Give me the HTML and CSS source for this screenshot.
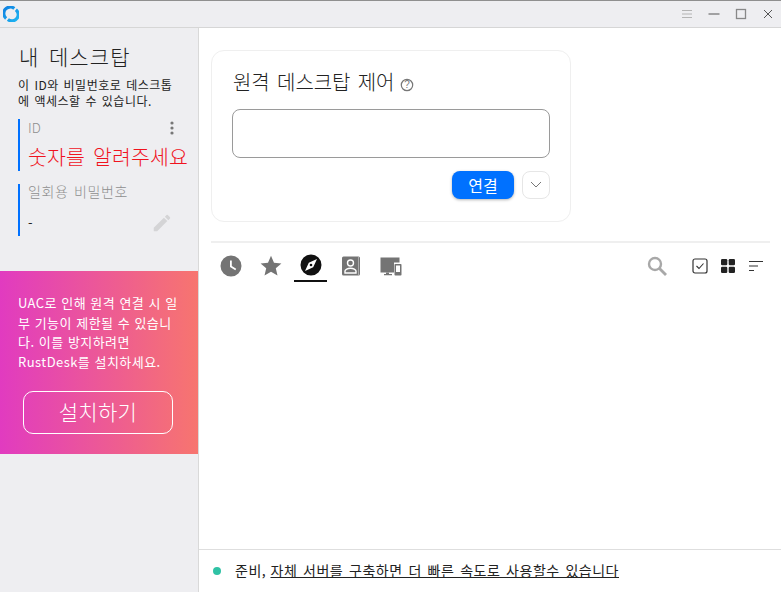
FILE: index.html
```html
<!DOCTYPE html>
<html lang="ko">
<head>
<meta charset="utf-8">
<title>RustDesk</title>
<link rel="stylesheet" href="styles.css">
</head>
<body>
<div class="window">
  <header class="titlebar">
    <svg class="logo" width="16" height="16" viewBox="0 0 16 16"><defs><linearGradient id="lg" x1="0" y1="0" x2="1" y2="1"><stop offset="0" stop-color="#0f7fe0"/><stop offset="1" stop-color="#1fb6f2"/></linearGradient></defs><path d="M3.100 12.400A6.300 6.300 0 0 1 11.300 2.500M12.900 3.700A6.300 6.300 0 0 1 4.900 13.500" fill="none" stroke="url(#lg)" stroke-width="3.200" /></svg>
    <div class="winbtns">
      <svg width="12" height="12" viewBox="0 0 12 12"><path d="M1 2.500h10M1 6h10M1 9.500h10" stroke="#b4b4b4" stroke-width="1"/></svg>
      <svg width="12" height="12" viewBox="0 0 12 12"><path d="M0.500 6h11" stroke="#555" stroke-width="1"/></svg>
      <svg width="12" height="12" viewBox="0 0 12 12"><rect x="1.500" y="1.500" width="9" height="9" fill="none" stroke="#888" stroke-width="1.300"/></svg>
      <svg width="12" height="12" viewBox="0 0 12 12"><path d="M2 2l8 8M10 2l-8 8" stroke="#555" stroke-width="1"/></svg>
    </div>
  </header>
  <div class="body">
    <aside class="sidebar">
      <div class="side-top">
        <h1 class="side-title">내 데스크탑</h1>
        <p class="side-desc">이 ID와 비밀번호로 데스크톱<br>에 액세스할 수 있습니다.</p>
        <div class="field field-id">
          <div class="field-head"><span class="field-label">ID</span><svg class="kebab" width="4" height="14" viewBox="0 0 4 14"><circle cx="2" cy="2" r="1.600"/><circle cx="2" cy="7" r="1.600"/><circle cx="2" cy="12" r="1.600"/></svg></div>
          <div class="id-value">숫자를 알려주세요</div>
        </div>
        <div class="field field-pw">
          <div class="field-label pw-label">일회용 비밀번호</div>
          <div class="pw-row"><span class="pw-value">-</span><svg class="pencil" width="22" height="22" viewBox="0 0 24 24"><path d="M3 17.250V21h3.750L17.800 9.940l-3.750-3.750L3 17.250zM20.700 7.040a1 1 0 0 0 0-1.410l-2.340-2.340a1 1 0 0 0-1.410 0l-1.830 1.830 3.750 3.750 1.830-1.830z"/></svg></div>
        </div>
      </div>
      <div class="promo">
        <p class="promo-text">UAC로 인해 원격 연결 시 일<br>부 기능이 제한될 수 있습니<br>다. 이를 방지하려면<br>RustDesk를 설치하세요.</p>
        <div class="promo-btn">설치하기</div>
      </div>
    </aside>
    <main class="main">
      <div class="content">
        <section class="card">
          <div class="card-title"><span>원격 데스크탑 제어</span><svg class="help" width="14" height="14" viewBox="0 0 14 14"><circle cx="7" cy="7" r="5.700" fill="none" stroke="#777" stroke-width="1.200"/><text class="help-q" x="7" y="10" text-anchor="middle">?</text></svg></div>
          <div class="card-input"></div>
          <div class="card-actions">
            <div class="connect">연결</div>
            <div class="more"><svg width="12" height="8" viewBox="0 0 12 8"><path d="M1 1l5 5 5-5" fill="none" stroke="#777" stroke-width="1"/></svg></div>
          </div>
        </section>
        <div class="tabs-wrap">
          <nav class="tabs">
            <div class="tab"><svg width="24" height="24" viewBox="0 0 24 24"><path fill="#747474" d="M12 1.500a10.500 10.500 0 1 0 0 21 10.500 10.500 0 0 0 0-21zm4.300 14.800L11 13V6.500h1.800V12l4.400 2.800z"/></svg></div>
            <div class="tab"><svg width="24" height="24" viewBox="0 0 24 24"><path fill="#747474" d="M12 1.800l3 7 7.400.6-5.600 4.900 1.700 7.300L12 17.800l-6.500 3.800 1.700-7.300L1.600 9.400l7.400-.6z"/></svg></div>
            <div class="tab active"><svg width="24" height="24" viewBox="0 0 24 24"><path fill="#111" fill-rule="evenodd" d="M12 1.500a10.500 10.500 0 1 0 0 21 10.500 10.500 0 0 0 0-21zM6 18l3.800-8.200L18 6l-3.800 8.200z"/><circle cx="12" cy="12" r="1.300" fill="#111"/></svg></div>
            <div class="tab"><svg width="24" height="24" viewBox="0 0 24 24"><rect x="3" y="2.500" width="18" height="19" rx="1.500" fill="#747474"/><circle cx="11.500" cy="9" r="3" fill="none" stroke="#fff" stroke-width="1.400"/><path d="M6 19v-2c0-1.500 2.700-2.800 5.500-2.800s5.500 1.300 5.500 2.800v2z" fill="none" stroke="#fff" stroke-width="1.400"/><path d="M19.500 3v18" stroke="#aaa" stroke-width="1"/></svg></div>
            <div class="tab"><svg width="24" height="24" viewBox="0 0 24 24"><path fill="#747474" d="M1.500 3.500h19v5h-5.500v10H1.500z"/><path fill="#747474" d="M7 18.500h3v1.500h3v1.200H5V20h2z"/><rect x="15.500" y="10" width="7" height="11.500" rx=".8" fill="#747474"/><rect x="17" y="11.500" width="4" height="6.500" fill="#fff"/></svg></div>
          </nav>
          <div class="tools">
            <svg class="tool-search" width="22" height="22" viewBox="0 0 22 22"><circle cx="9" cy="9" r="6" fill="none" stroke="#a8a8a8" stroke-width="2.400"/><path d="M13.500 13.500L20 20" stroke="#a8a8a8" stroke-width="2.800"/></svg>
            <svg class="tool-check" width="16" height="16" viewBox="0 0 16 16"><rect x="1" y="1" width="14" height="14" rx="2" fill="none" stroke="#333" stroke-width="1.200"/><path d="M4.500 8l2.500 2.500 4.500-5" fill="none" stroke="#333" stroke-width="1.100"/></svg>
            <svg class="tool-grid" width="16" height="16" viewBox="0 0 16 16"><rect x="1" y="1" width="6.300" height="6.300" rx="1.200" fill="#222"/><rect x="8.700" y="1" width="6.300" height="6.300" rx="1.200" fill="#222"/><rect x="1" y="8.700" width="6.300" height="6.300" rx="1.200" fill="#222"/><rect x="8.700" y="8.700" width="6.300" height="6.300" rx="1.200" fill="#222"/></svg>
            <svg class="tool-sort" width="16" height="16" viewBox="0 0 16 16"><path d="M1 3.500h14M1 8h9M1 12.500h5" stroke="#333" stroke-width="1.200"/></svg>
          </div>
        </div>
      </div>
      <footer class="status">
        <span class="dot"></span>
        <span class="status-text">준비, <span class="status-link">자체 서버를 구축하면 더 빠른 속도로 사용할수 있습니다</span></span>
      </footer>
    </main>
  </div>
</div>
</body>
</html>
```
FILE: styles.css
```css
* { box-sizing: border-box; }
html, body { margin: 0; padding: 0; }
body {
  font-family: "Noto Sans CJK KR", "Open Sans", sans-serif;
  font-weight: 300;
  width: 781px; height: 592px; overflow: hidden; background: #fff; color: #222;
}
p, h1 { margin: 0; }
.window { display: flex; flex-direction: column; height: 592px; border-top: 1px solid #8f8f8f; }
.titlebar {
  height: 27px; flex: none; display: flex; align-items: center; justify-content: space-between;
  background: #eeeef1; border-bottom: 1px solid #d6d6d6; padding: 0 7px 0 3px;
}
.logo { display: block; margin-top: -1px; }
.winbtns { display: flex; gap: 15px; align-items: center; }
.body { flex: 1; display: flex; min-height: 0; }
.sidebar { width: 199px; flex: none; background: #eeeef1; border-right: 1px solid #d9d9d9; display: flex; flex-direction: column; }
.side-top { padding: 14px 0 0 19px; height: 243px; }
.side-title { font-size: 21px; font-weight: 300; line-height: 28px; color: #222; letter-spacing: 1.100px; word-spacing: 2.500px; }
.side-desc { margin: 7px 0 0 -1px; font-size: 12px; line-height: 16px; color: #222; letter-spacing: .5px; word-spacing: 1px; font-weight: 400; }
.field { border-left: 2px solid #0071ff; margin-left: -1px; }
.field-id { margin-top: 10px; height: 52px; padding-left: 8px; }
.field-head { display: flex; justify-content: space-between; align-items: center; height: 18px; padding-right: 24px; }
.field-label { font-size: 13.500px; color: #8f8f8f; line-height: 18px; margin-top: -2px; }
.kebab { fill: #777; }
.id-value { font-size: 20.500px; line-height: 28px; color: #f0131e; margin-top: 5px; white-space: nowrap; letter-spacing: .15px; word-spacing: 2px; }
.field-pw { display: flow-root; margin-top: 13px; height: 52px; padding-left: 8px; }
.pw-label { font-size: 14px; letter-spacing: .6px; word-spacing: 1px; }
.pw-row { display: flex; justify-content: space-between; align-items: center; margin-top: 12px; padding-right: 25px; }
.pw-value { font-size: 13px; line-height: 20px; color: #222; font-weight: 400; }
.pencil { fill: #d4d4d6; }
.promo {
  height: 183px; padding: 22px 18px 0; color: #fff;
  background: linear-gradient(90deg, #e13bc0, #f7756f);
}
.promo-text { font-size: 13px; line-height: 19.700px; letter-spacing: .45px; word-spacing: .2px; white-space: nowrap; font-weight: 400; }
.promo-btn {
  margin: 19px 7px 0 5px; height: 43px; padding-bottom: 2px; border: 1px solid #fff; border-radius: 10px;
  display: flex; align-items: center; justify-content: center; font-size: 21px; letter-spacing: .3px; 
}
.main { flex: 1; min-width: 0; display: flex; flex-direction: column; background: #fff; }
.content { flex: 1; padding: 22px 11px 0 12px; }
.card {
  width: 360px; height: 172px; border: 1px solid #efefef; border-radius: 13px; padding: 17px 20px 0 21px;
}
.card-title { display: flex; align-items: center; gap: 6px; height: 28px; font-size: 20px; line-height: 28px; color: #222; letter-spacing: -.1px; word-spacing: 2px; }
.help { margin-top: 5px; }
.help-q { font-size: 10px; fill: #777; font-family: "Liberation Sans", sans-serif; }
.card-input { margin: 13px 0 0 -1px; height: 49px; border: 1px solid #9a9a9a; border-radius: 8px; background: #fff; }
.card-actions { display: flex; justify-content: flex-end; gap: 8px; margin-top: 13px; }
.connect {
  width: 62px; height: 28px; background: #0071ff; color: #fff; border-radius: 8px; font-size: 16px; font-weight: 400;
  display: flex; align-items: center; justify-content: center; box-shadow: 0 1px 3px rgba(0,0,0,.3);
}
.more { width: 28px; height: 28px; border: 1px solid #e6e6e6; border-radius: 8px; display: flex; align-items: center; justify-content: center; }
.tabs-wrap { margin-top: 19px; border-top: 2px solid #efefef; height: 46px; display: flex; justify-content: space-between; }
.tabs { display: flex; gap: 7px; padding-left: 3px; }
.tab { width: 33px; height: 39px; display: flex; align-items: center; justify-content: center; padding-top: 7px; }
.tab.active { border-bottom: 2px solid #111; padding-top: 7px; }
.tools { display: flex; align-items: center; height: 46px; padding-top: 0; padding-right: 6px; }
.tool-search { margin-right: 24px; margin-top: 0; }
.tool-check { margin-right: 12px; }
.tool-grid { margin-right: 12px; }
.status { height: 43px; flex: none; border-top: 1px solid #dedede; display: flex; align-items: center; padding-left: 14px; gap: 14px; }
.dot { width: 8px; height: 8px; border-radius: 50%; background: #30c2a5; }
.status-text { font-size: 14px; color: #222; letter-spacing: .5px; word-spacing: 1.400px; font-weight: 400; position: relative; top: -1px; }
.status-link { text-decoration: underline; margin-left: -1.500px; }
```
